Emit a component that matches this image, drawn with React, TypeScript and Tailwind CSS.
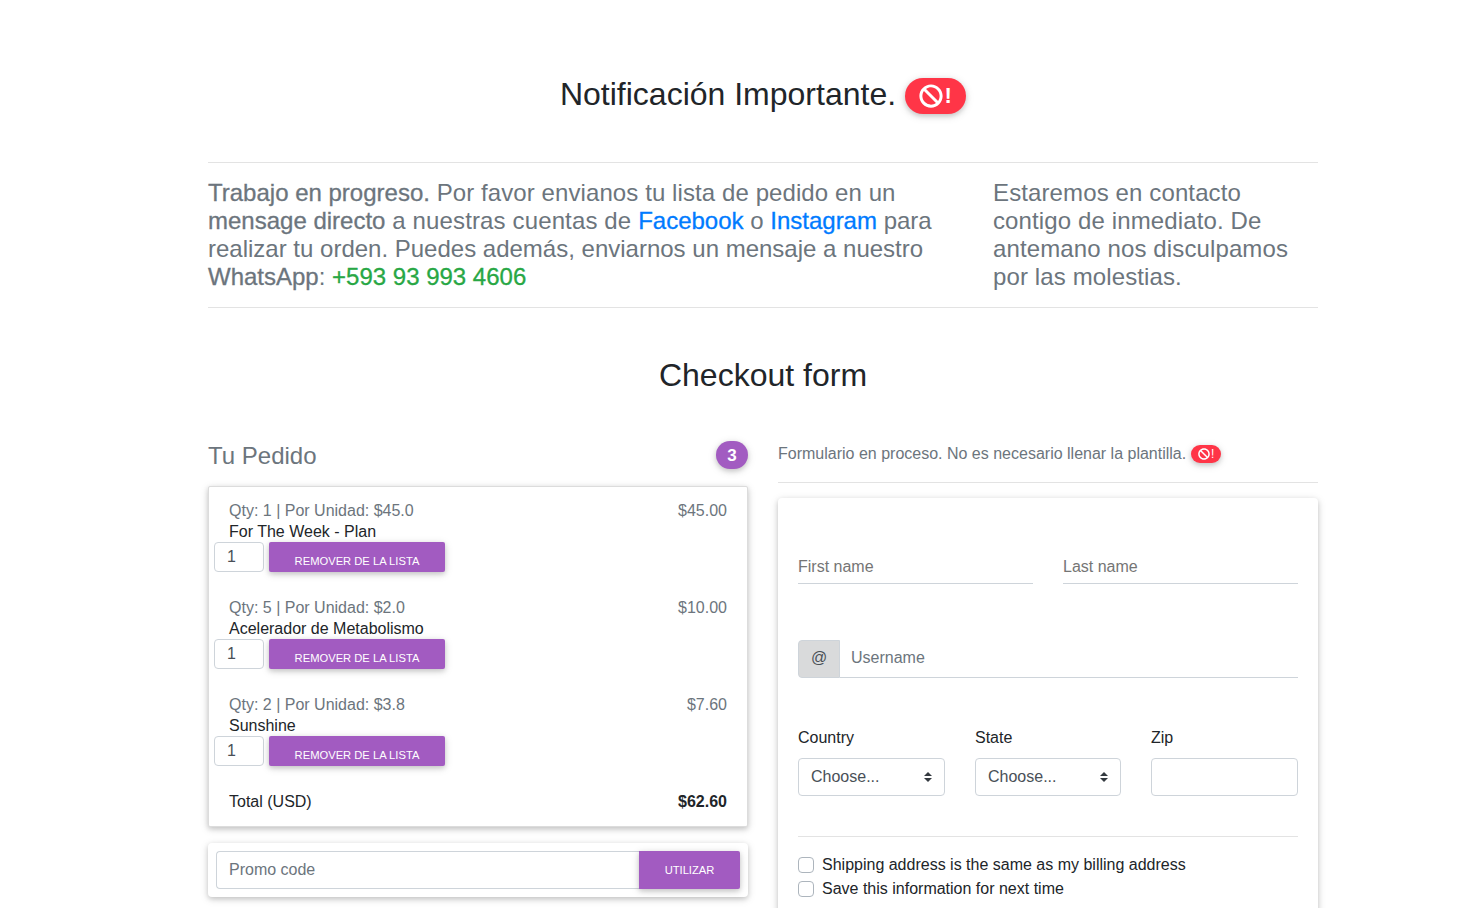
import { FaBan } from "react-icons/fa"

const items = [
    { qty: "Qty: 1 | Por Unidad: $45.0", name: "For The Week - Plan", price: "$45.00" },
    { qty: "Qty: 5 | Por Unidad: $2.0", name: "Acelerador de Metabolismo", price: "$10.00" },
    { qty: "Qty: 2 | Por Unidad: $3.8", name: "Sunshine", price: "$7.60" },
]

const cardShadow = "shadow-[0_2px_5px_0_rgba(0,0,0,0.16),0_2px_10px_0_rgba(0,0,0,0.12)]"
const btnShadow = "shadow-[0_2px_5px_0_rgba(0,0,0,0.16),0_2px_10px_0_rgba(0,0,0,0.12)]"
const medium = "[-webkit-text-stroke:0.3px_currentColor]"

function BanBadge() {
    return (
        <span className={`mt-[3px] inline-flex h-[36px] w-[61px] items-center justify-center gap-[1px] rounded-full bg-[#ff3547] text-[22px] font-bold leading-none text-white ${btnShadow}`}>
            <FaBan className="h-[24px] w-[24px]" />
            <span>!</span>
        </span>
    )
}

function SmallBanBadge() {
    return (
        <span className={`ml-[5px] inline-flex h-[18px] w-[30px] items-center justify-center gap-[1px] rounded-full bg-[#ff3547] text-[12px] font-bold leading-none text-white ${btnShadow}`}>
            <FaBan className="h-[12px] w-[12px]" />
            <span className="font-normal">!</span>
        </span>
    )
}

function OrderItem({ qty, name, price }: { qty: string; name: string; price: string }) {
    return (
        <div className="h-[97px]">
            <div className="flex justify-between px-[20px] text-[16px] leading-[24px] text-[#6c757d]">
                <span>{qty}</span>
                <span>{price}</span>
            </div>
            <div className="-mt-[3px] px-[20px] text-[16px] leading-[24px] text-[#212529]">{name}</div>
            <div className="-mt-[2px] flex gap-[5px] pl-[5px]">
                <div className="flex h-[30px] w-[50px] items-center rounded-[4px] border border-[#ced4da] pl-[12px] text-[16px] text-[#495057]">1</div>
                <button className={`h-[30px] w-[176px] rounded-[2px] bg-[#a25bc1] pt-[8px] text-[11.2px] font-medium uppercase text-white ${btnShadow}`}>
                    Remover de la lista
                </button>
            </div>
        </div>
    )
}

function OrderColumn() {
    return (
        <div className="w-[540px]">
            <div className="flex h-[45px] items-start justify-between">
                <h4 className="pt-[1px] text-[24px] leading-[28px] text-[#6c757d]">Tu Pedido</h4>
                <span className={`flex h-[28px] w-[32px] items-center justify-center rounded-full bg-[#a25bc1] pt-[1px] text-[17px] font-bold text-white ${btnShadow}`}>3</span>
            </div>
            <div className={`h-[341px] rounded-[2px] border border-[#dcdcdc] bg-white pt-[12px] ${cardShadow}`}>
                {items.map((i, key) => (
                    <OrderItem key={key} qty={i.qty} name={i.name} price={i.price} />
                ))}
                <div className="flex justify-between px-[20px] text-[16px] leading-[24px] text-[#212529]">
                    <span>Total (USD)</span>
                    <span className="font-bold">$62.60</span>
                </div>
            </div>
            <div className={`mt-[16px] flex h-[54px] rounded-[4px] bg-white p-[8px] ${cardShadow}`}>
                <div className="flex h-[38px] flex-1 items-center rounded-l-[4px] border border-r-0 border-[#ced4da] pl-[12px] text-[16px] text-[#6c757d]">Promo code</div>
                <button className={`h-[38px] w-[101px] rounded-r-[2px] bg-[#a25bc1] text-[11.2px] font-medium uppercase text-white ${btnShadow}`}>Utilizar</button>
            </div>
        </div>
    )
}

function FormColumn() {
    return (
        <div className="w-[540px]">
            <div className="-mt-[1px] flex h-[28px] items-center text-[16px] text-[#6c757d]">
                Formulario en proceso. No es necesario llenar la plantilla.
                <SmallBanBadge />
            </div>
            <hr className="mt-[14px] border-[#e3e3e3]" />
            <div className={`mt-[15px] h-[500px] rounded-[4px] bg-white px-[20px] ${cardShadow}`}>
                <div className="grid grid-cols-2 gap-[30px] pt-[49px]">
                    <div className="flex h-[37px] items-center border-b border-[#ced4da] pt-[4px] text-[16px] text-[#757575]">First name</div>
                    <div className="flex h-[37px] items-center border-b border-[#ced4da] pt-[4px] text-[16px] text-[#757575]">Last name</div>
                </div>
                <div className="mt-[56px] flex h-[38px]">
                    <div className="flex w-[42px] items-center justify-center rounded-l-[4px] border border-[#ced4da] bg-[#d9dadb] pb-[2px] text-[16px] text-[#495057]">@</div>
                    <div className="flex flex-1 items-center border-b border-[#ced4da] pb-[2px] pl-[11px] text-[16px] text-[#6c757d]">Username</div>
                </div>
                <div className="mt-[48px] grid grid-cols-[147px_146px_147px] gap-[30px]">
                    <SelectField label="Country" />
                    <SelectField label="State" />
                    <div>
                        <div className="text-[16px] leading-[24px] text-[#212529]">Zip</div>
                        <div className="mt-[8px] h-[38px] rounded-[4px] border border-[#ced4da]" />
                    </div>
                </div>
                <hr className="mt-[40px] border-[#e3e3e3]" />
                <div className="pt-[16px]">
                    <CheckRow label="Shipping address is the same as my billing address" />
                    <CheckRow label="Save this information for next time" />
                </div>
            </div>
        </div>
    )
}

function SelectField({ label }: { label: string }) {
    return (
        <div>
            <div className="text-[16px] leading-[24px] text-[#212529]">{label}</div>
            <div className="mt-[8px] flex h-[38px] items-center justify-between rounded-[4px] border border-[#ced4da] pl-[12px] pr-[12px] text-[16px] text-[#495057]">
                <span>Choose...</span>
                <svg width="8" height="10" viewBox="0 0 8 10" className="fill-[#343a40]">
                    <path d="M4 0 L8 4 H0 Z M4 10 L0 6 H8 Z" />
                </svg>
            </div>
        </div>
    )
}

function CheckRow({ label }: { label: string }) {
    return (
        <div className="flex h-[24px] items-center gap-[8px] text-[16px] text-[#212529]">
            <span className="h-[16px] w-[16px] rounded-[4px] border border-[#adb5bd]" />
            <span>{label}</span>
        </div>
    )
}

export default function App() {
    return (
        <main className="h-[908px] overflow-hidden bg-white font-['Liberation_Sans',Arial,sans-serif]">
            <section className="ml-[208px] w-[1110px]">
                <div className="flex items-start justify-center gap-[9px] pt-[75px]">
                    <h1 className="text-[32px] leading-[38px] text-[#212529]">Notificación Importante.</h1>
                    <BanBadge />
                </div>

                <hr className="mt-[48px] border-[#e3e3e3]" />
                <div className="flex py-[16px] text-[24px] leading-[28px] text-[#6c757d]">
                    <p className="w-[785px] pr-[20px]">
                        <span className={medium}>Trabajo en progreso.</span>
                        <span className="tracking-[0.09px]"> Por favor envianos tu lista de pedido en un </span>
                        <span className={medium}>mensage directo</span>
                        <span className="tracking-[0.14px]"> a nuestras cuentas de </span>
                        <span className={`text-[#007bff] ${medium}`}>Facebook</span> o{" "}
                        <span className={`text-[#007bff] ${medium}`}>Instagram</span> para realizar tu orden. Puedes además, enviarnos un mensaje a nuestro{" "}
                        <span className={medium}>WhatsApp</span>: <span className={`text-[#28a745] ${medium}`}>+593 93 993 4606</span>
                    </p>
                    <p className="flex-1 pr-[20px] tracking-[0.12px]">Estaremos en contacto contigo de inmediato. De antemano nos disculpamos por las molestias.</p>
                </div>
                <hr className="border-[#e3e3e3]" />

                <h2 className="pt-[48px] text-center text-[32px] leading-[38px] text-[#212529]">Checkout form</h2>

                <div className="mt-[47px] flex gap-[30px]">
                    <OrderColumn />
                    <FormColumn />
                </div>
            </section>
        </main>
    )
}
